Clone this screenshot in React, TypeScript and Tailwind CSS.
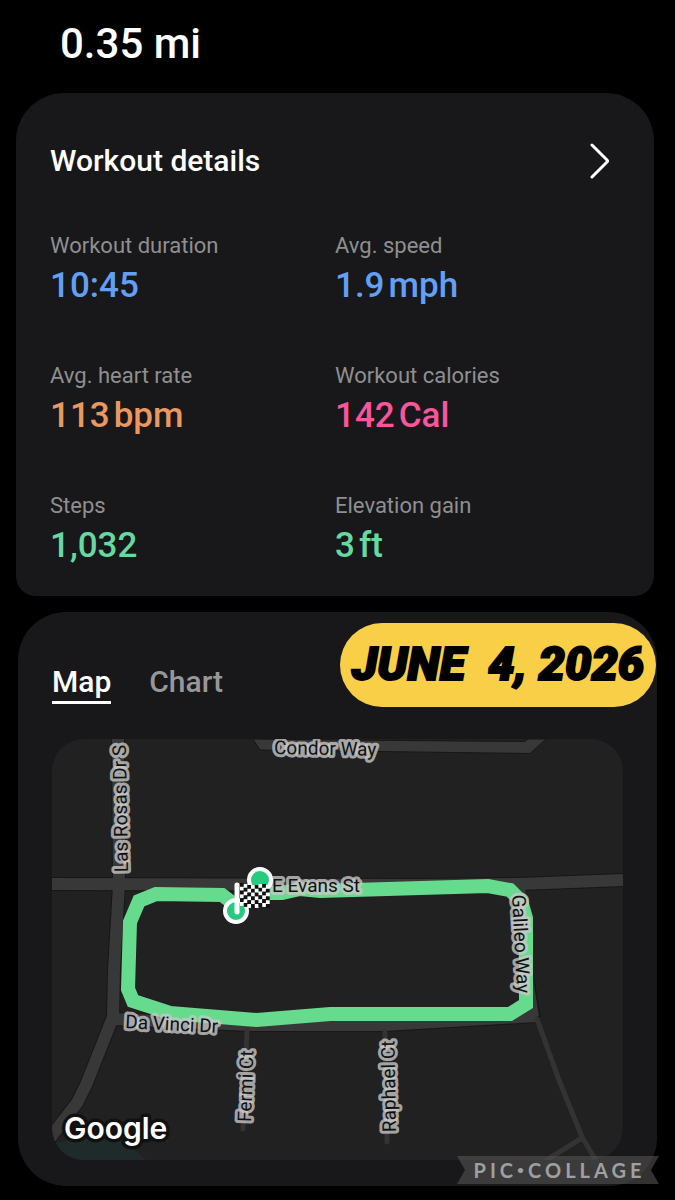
import { useState } from "react";

interface Metric {
  label: string;
  value: string;
  unit?: string;
  color: string;
}

const METRICS: Metric[] = [
  { label: "Workout duration", value: "10:45", color: "text-[#62a0f6]" },
  { label: "Avg. speed", value: "1.9", unit: "mph", color: "text-[#62a0f6]" },
  { label: "Avg. heart rate", value: "113", unit: "bpm", color: "text-[#ea9860]" },
  { label: "Workout calories", value: "142", unit: "Cal", color: "text-[#f8559b]" },
  { label: "Steps", value: "1,032", color: "text-[#65d9a0]" },
  { label: "Elevation gain", value: "3", unit: "ft", color: "text-[#65d9a0]" },
];

const TABS = ["Map", "Chart"];

export default function App() {
  return (
    <main className="min-h-screen bg-black pt-5 pb-[14px] text-white font-['Roboto','Noto_Sans',sans-serif]">
      <p className="pl-[60px] text-[42px] leading-[48px] font-medium">0.35 mi</p>
      <WorkoutDetails />
      <RouteCard />
    </main>
  );
}

function WorkoutDetails() {
  return (
    <section className="mt-[25px] ml-4 mr-[21px] rounded-t-[48px] rounded-b-[20px] bg-[#18181a] px-[34px] pt-[50px] pb-6">
      <div className="flex items-center justify-between">
        <h2 className="text-[30px] leading-9 font-medium">Workout details</h2>
        <button aria-label="Open workout details" className="pr-[10px]">
          <svg width="22" height="36" viewBox="0 0 22 36" fill="none" stroke="currentColor" strokeWidth="3" strokeLinecap="round" strokeLinejoin="round">
            <path d="M4 2 L19 17 Q20 18 19 19 L4 34" />
          </svg>
        </button>
      </div>
      <dl className="mt-[53px] grid grid-cols-2 gap-y-[50px]">
        {METRICS.map((m) => (
          <div key={m.label}>
            <dt className="text-[22px] leading-7 text-[#8f8f91]">{m.label}</dt>
            <dd className={`flex gap-1 text-[35px] leading-[52px] font-medium ${m.color}`}>
              <span>{m.value}</span>
              {m.unit && <span>{m.unit}</span>}
            </dd>
          </div>
        ))}
      </dl>
    </section>
  );
}

function RouteCard() {
  const [active, setActive] = useState("Map");

  return (
    <section className="relative mt-4 mx-[18px] rounded-[48px] bg-[#18181a] px-[34px] pt-[52px] pb-[26px]">
      <div className="flex gap-[38px]">
        {TABS.map((tab) => (
          <button
            key={tab}
            onClick={() => setActive(tab)}
            className={`border-b-[3px] pb-px text-[30px] leading-9 font-medium ${
              tab === active ? "border-white text-white" : "border-transparent text-[#97979a]"
            }`}
          >
            {tab}
          </button>
        ))}
      </div>
      <div className="mt-[35px] overflow-hidden rounded-[32px] bg-[#212121]">
        <RouteMap />
      </div>
      <DateSticker />
      <Watermark />
    </section>
  );
}

function DateSticker() {
  return (
    <div className="absolute top-[11px] right-px flex h-[84px] w-[316px] items-center justify-center rounded-full bg-[#f8cf46] pb-1">
      <span className="whitespace-pre text-[47px] leading-none font-black italic text-black [-webkit-text-stroke:2px_#000]">
        JUNE  4, 2026
      </span>
    </div>
  );
}

function Watermark() {
  return (
    <div className="absolute right-[-2px] bottom-[2px] flex h-7 w-[202px] items-center justify-center bg-[#545454]/60 pl-[3px] [clip-path:polygon(0_0,100%_0,calc(100%-8px)_50%,100%_100%,0_100%,8px_50%)]">
      <span className="flex items-center text-[20px] leading-none font-bold tracking-[4px] text-[#a0a0a0] font-['Lato',sans-serif]">
        PIC<span className="text-[12px]">•</span>COLLAGE
      </span>
    </div>
  );
}

function RouteMap() {
  return (
    <svg viewBox="52 739 571 421" className="block w-full" role="img" aria-label="Route map">
      <path d="M52 1143 L97 1137 L118 1140 L131 1147 L146 1160 H52 Z" fill="#1f2a2b" />

      {/* streets: dark casing first, then the fill */}
      <g fill="none" stroke="#171717" strokeWidth="14" strokeLinejoin="round">
        <path d="M52 884 L420 885 L520 884 L623 880" />
        <path d="M118 739 L119 885 L114 970 L113 1017 L86 1085 L77 1103 L50 1138" />
        <path d="M113 1019 L250 1025 L385 1025 L537 1016" />
        <path d="M519 884 L524 960 L534 1018" />
      </g>
      <path d="M253 739 L260 750 L340 751 L530 753.5 L546 739 H528 L525 741.500 L340 740 Z" fill="#383838" stroke="#171717" />
      <g fill="none" stroke="#383838" strokeWidth="12" strokeLinejoin="round">
        <path d="M52 884 L420 885 L520 884 L623 880" />
        <path d="M118 739 L119 885 L114 970 L113 1017 L86 1085 L77 1103 L50 1138" />
        <path d="M113 1019 L250 1025 L385 1025 L537 1016" />
        <path d="M519 884 L524 960 L533 1017" />
      </g>
      <g fill="none" stroke="#333" strokeWidth="5" strokeLinecap="round">
        <path d="M247 1030 L243 1129" />
        <path d="M385 1032 L387 1142" />
        <path d="M537 1019 L559 1080 L582 1137 L598 1164" />
        <path d="M582 1138 L540 1164" />
      </g>

      <path
        d="M238 907 L222 895 L156 894 L139 901 L130 922 L128 989 L133 1001 L170 1013 L257 1020 L330 1014 L510 1014 L526 1004 L526 918 L521 901 L510 890 L488 886 L320 891 L300 889 L282 893 L268 893"
        fill="none"
        stroke="#66da8d"
        strokeWidth="14"
      />

      <g fontSize="19" fill="#111" stroke="#c8c8c8" strokeOpacity="0.8" strokeWidth="6" strokeLinejoin="round" paintOrder="stroke">
        <text x="274" y="754" transform="rotate(1 274 754)">Condor Way</text>
        <text x="272" y="892">E Evans St</text>
        <text x="125" y="1028" transform="rotate(3 125 1028)">Da Vinci Dr</text>
        <text x="128" y="872" transform="rotate(-91 128 872)">Las Rosas Dr S</text>
        <text x="251" y="1122" transform="rotate(-88 251 1122)">Fermi Ct</text>
        <text x="396" y="1132" transform="rotate(-91 396 1132)">Raphael Ct</text>
        <text x="512" y="895" transform="rotate(87 512 895)">Galileo Way</text>
      </g>

      <Marker x={260} y={880} />
      <Marker x={236} y={911} />
      <Flag />

      <text x="64" y="1139" fontSize="30" fontWeight="600" fill="#fff" stroke="#111" strokeWidth="7" strokeLinejoin="round" paintOrder="stroke" className="font-['Inter',sans-serif]">
        Google
      </text>
    </svg>
  );
}

function Marker({ x, y }: { x: number; y: number }) {
  return <circle cx={x} cy={y} r="11" fill="#26cb80" stroke="#fff" strokeWidth="4" />;
}

// vertical shift of each flag column, gives the cloth its wave
const WAVE = [0, 1, 2, 2, 2, 1, 1, 2];

function Flag() {
  return (
    <g>
      {WAVE.map((dy, col) =>
        [0, 1, 2, 3, 4, 5].map((row) => (
          <rect
            key={`${col}-${row}`}
            x={240 + col * 3.7}
            y={883 + dy + row * 3.8}
            width="3.8"
            height="3.9"
            fill={(row + col) % 2 ? "#fff" : "#111"}
          />
        )),
      )}
      <path d="M237 885 V912" stroke="#fff" strokeWidth="5" strokeLinecap="round" />
    </g>
  );
}
